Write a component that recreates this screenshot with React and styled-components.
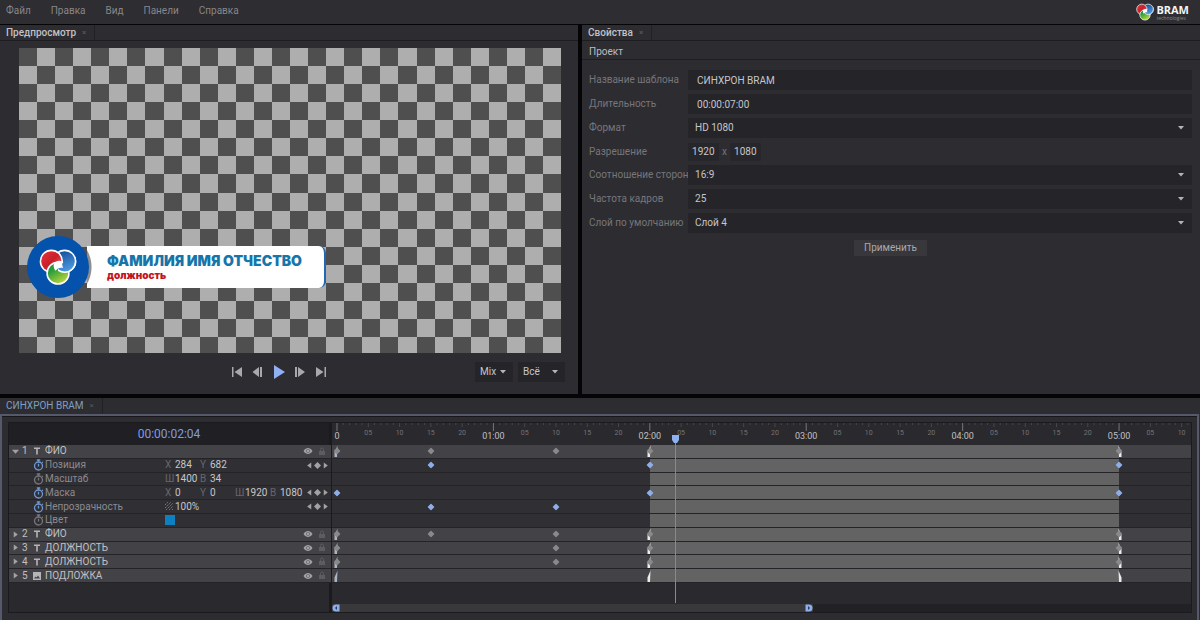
import React from "react"
import styled, { createGlobalStyle, css } from "styled-components"

const GlobalStyle = createGlobalStyle`
  * {
    box-sizing: border-box;
  }
  body {
    margin: 0;
    background: #050507;
    color: #bdbdc0;
    font-family: Roboto, "Liberation Sans", sans-serif;
    font-size: 10px;
    line-height: 12px;
  }
  button, input, select {
    font: inherit;
    color: inherit;
    border: 0;
    border-radius: 0;
    margin: 0;
    padding: 0;
    background: none;
    outline: none;
  }
`

const Page = styled.div`
  display: flex;
  flex-direction: column;
  min-height: 100vh;
`

const Header = styled.header`
  display: flex;
  align-items: center;
  justify-content: space-between;
  height: 24px;
  padding: 0 11px 3px 6px;
  background: #2e2d31;
`

const Menu = styled.nav`
  display: flex;
  gap: 20px;
`

const MenuItem = styled.button`
  color: #87868a;
`

const Brand = styled.div`
  display: flex;
  align-items: center;
  gap: 2px;
  padding-top: 3px;
`

const BrandName = styled.div`
  color: #f4f4f6;
  font-family: "Open Sans", sans-serif;
  font-size: 11px;
  font-weight: 700;
  line-height: 12px;
  small {
    display: block;
    color: #85858a;
    font-size: 5px;
    font-weight: 400;
    line-height: 5px;
  }
`

const Panels = styled.main`
  display: grid;
  grid-template-columns: 29fr 31fr;
  gap: 4px;
  padding: 1px 0 4px;
`

const Panel = styled.section`
  display: flex;
  flex-direction: column;
  background: #2d2c31;
`

const TabBar = styled.div`
  display: flex;
  height: 16px;
  border-bottom: 1px solid #1d1c20;
  background: #2d2c31;
`

const Tab = styled.div`
  display: flex;
  align-items: center;
  gap: 6px;
  padding: 0 8px 0 6px;
  border-right: 1px solid #212024;
  color: ${p => (p.$accent ? "#7d9fc0" : "#c2c2c5")};
  font-weight: ${p => (p.$accent ? 400 : 500)};
`

const TabClose = styled.button`
  color: #58575c;
  font-size: 8px;
  line-height: 8px;
`

const StageWrap = styled.div`
  padding: 7px 17px 0 19px;
`

const Stage = styled.div`
  position: relative;
  aspect-ratio: 16 / 9;
  background: #aeaeae;
`

const Checker = styled.svg`
  display: block;
  width: 100%;
  height: 100%;
`

const LowerThird = styled.div`
  position: absolute;
  left: 8px;
  bottom: 55px;
  display: flex;
  align-items: center;
`

const Badge = styled.div`
  z-index: 1;
  display: flex;
  align-items: center;
  justify-content: center;
  width: 62px;
  height: 62px;
  border-radius: 50%;
  background: #0452ab;
`

const Plate = styled.div`
  width: 239px;
  height: 42px;
  margin-left: -2px;
  padding: 7px 0 0 20px;
  border-right: 2px solid #2367b2;
  border-radius: 0 7px 7px 0;
  background: radial-gradient(circle at -29px 50%, #8d8d8d 33px, #fff 34px);
  font-family: Inter, sans-serif;
  font-weight: 900;
  white-space: nowrap;
`

const PersonName = styled.div`
  color: #1675a9;
  font-size: 14px;
  line-height: 15px;
`

const PersonRole = styled.div`
  color: #c4141c;
  font-size: 10px;
  line-height: 14px;
`

const Transport = styled.div`
  display: flex;
  align-items: center;
  height: 41px;
  padding: 0 13px 3px 0;
`

const TransportButtons = styled.div`
  display: flex;
  margin-left: 40%;
  margin-right: auto;
`

const TransportButton = styled.button`
  display: flex;
  justify-content: center;
  width: 21px;
  color: ${p => (p.$main ? "#8fb0f4" : "#a9a9ac")};
`

const SelectBox = styled.div`
  position: relative;
  width: ${p => p.$width || "100%"};
  margin-left: ${p => (p.$width ? "5px" : 0)};
  svg {
    position: absolute;
    right: ${p => (p.$width ? "7px" : "8px")};
    top: 8px;
    pointer-events: none;
  }
  select {
    display: block;
    width: 100%;
    height: 20px;
    padding: 0 ${p => (p.$width ? "5px" : "7px")};
    appearance: none;
    background: #252428;
    color: #c6c6c9;
  }
`

const SectionTitle = styled.h2`
  margin: 0;
  height: 19px;
  padding: 5px 7px 0;
  border-bottom: 1px solid #1f1e22;
  font-size: 10px;
  font-weight: 400;
`

const Form = styled.form`
  display: grid;
  grid-template-columns: 99px 1fr;
  align-items: center;
  gap: 4px 0;
  padding: 10px 8px 0 7px;
`

const Label = styled.label`
  color: #77767b;
  white-space: nowrap;
`

const TextField = styled.input`
  width: 100%;
  height: 20px;
  padding: 0 9px;
  background: #252428;
  color: #c6c6c9;
`

const Resolution = styled.div`
  display: flex;
  align-items: center;
  gap: 3px;
  height: 19px;
  color: #77767b;
  input {
    width: 31px;
    height: 18px;
    padding: 0 4px;
    background: #27262a;
    color: #c6c6c9;
  }
`

const ApplyButton = styled.button`
  grid-column: 1 / -1;
  justify-self: center;
  height: 16px;
  margin-top: 3px;
  padding: 0 10px;
  background: #38373b;
  color: #a9a9ac;
`

const TimelinePanel = styled.section`
  display: flex;
  flex: 1;
  flex-direction: column;
  background: #2d2c31;
  ${TabBar} {
    border-bottom: 0;
  }
`

const TimelineFrame = styled.div`
  display: flex;
  flex: 1;
  margin-right: 1px;
  padding: 6px 5px 7px 6px;
  border: 2px solid #56596b;
  border-bottom: 0;
  box-shadow: inset 0 1px #17161a;
`

const TimelineBody = styled.div`
  display: grid;
  flex: 1;
  grid-template-columns: 320px 1fr;
  gap: 3px;
  border: 1px solid #1b1a1e;
  background: linear-gradient(#1b1a1e, #1b1a1e) 320px 0 / 3px 100% no-repeat #2a292d;
`

const LayerList = styled.div`
  display: flex;
  flex-direction: column;
`

const Timecode = styled.output`
  height: 22px;
  background: #201f23;
  color: #7f9de0;
  font-size: 12px;
  line-height: 22px;
  text-align: center;
`

const Rows = styled.div`
  display: grid;
  grid-template-rows: repeat(10, 1fr);
  height: 138px;
`

const rowSurface = css`
  border-bottom: 1px solid #242327;
  background: ${p => (p.$layer ? "#434246" : "#302f34")};
`

const Row = styled.div`
  ${rowSurface}
  display: flex;
  align-items: center;
  min-height: 0;
  padding: 0 2px 0 ${p => (p.$layer ? "2px" : "24px")};
  color: ${p => (p.$layer ? "#c0c0c3" : "#8b8a8f")};
  svg {
    flex: none;
  }
`

const LayerNumber = styled.span`
  width: 10px;
  margin-left: 2px;
`

const LayerName = styled.span`
  flex: 1;
  margin-left: 3px;
`

const PropName = styled.span`
  width: 120px;
  margin-left: 1px;
`

const IconButton = styled.button`
  display: flex;
  justify-content: center;
  width: ${p => p.$width || 14}px;
  color: ${p => p.$color || "#a2a2a5"};
`

const Value = styled.label`
  display: flex;
  align-items: center;
  width: 35px;
  color: #67666b;
  white-space: nowrap;
  span {
    width: 10px;
  }
  input {
    width: 25px;
    height: 12px;
    color: #c6c6c9;
  }
`

const Swatch = styled.button`
  width: 10px;
  height: 10px;
  background: #0d80c2;
`

const KeyNav = styled.div`
  display: flex;
  margin-left: auto;
`

const LaneArea = styled.div`
  position: relative;
  display: flex;
  flex-direction: column;
  min-width: 0;
  overflow: hidden;
`

const Ruler = styled.div`
  position: relative;
  height: 22px;
  background: #2a292d;
  svg {
    display: block;
    width: 100%;
    height: 8px;
  }
`

const RulerLabel = styled.span`
  position: absolute;
  top: ${p => (p.$major ? 7 : 4)}px;
  transform: translateX(-50%);
  color: ${p => (p.$major ? "#c0c0c3" : "#747378")};
  font-size: ${p => (p.$major ? 9 : 7)}px;
`

const Lane = styled.div`
  ${rowSurface}
  position: relative;
`

const Clip = styled.div`
  position: absolute;
  top: 0;
  bottom: 0;
  background: #636363;
`

const Mark = styled.svg`
  position: absolute;
  top: 50%;
  transform: translate(-50%, -50%);
`

const Playhead = styled.div`
  position: absolute;
  top: 12px;
  bottom: 9px;
  width: 1px;
  background: #86879b;
  svg {
    position: absolute;
    left: -3px;
    top: 0;
  }
`

const ZoomBar = styled.div`
  height: 8px;
  margin-top: auto;
  background: #222125;
`

const ZoomThumb = styled.div`
  display: flex;
  justify-content: space-between;
  width: 56%;
  height: 8px;
  background: #39393b;
`

const VISIBLE_FRAMES = 137.3
const at = frame => `${((frame + 0.8) / VISIBLE_FRAMES) * 100}%`

const layers = [
  { id: 1, type: "text", name: "ФИО", open: true, keys: [0, 15, 35, 50, 125] },
  { prop: "Позиция", active: true, nav: true, values: [["X", 284], ["Y", 682]], keys: [15, 50, 125] },
  { prop: "Масштаб", values: [["Ш", 1400], ["В", 34]], keys: [] },
  { prop: "Маска", active: true, nav: true, values: [["X", 0], ["Y", 0], ["Ш", 1920], ["В", 1080]], keys: [0, 50, 125] },
  { prop: "Непрозрачность", active: true, nav: true, values: [[null, "100%"]], keys: [15, 35] },
  { prop: "Цвет", swatch: true, keys: [] },
  { id: 2, type: "text", name: "ФИО", keys: [0, 15, 35, 50, 125] },
  { id: 3, type: "text", name: "ДОЛЖНОСТЬ", keys: [0, 35, 50, 125] },
  { id: 4, type: "text", name: "ДОЛЖНОСТЬ", keys: [0, 35, 50, 125] },
  { id: 5, type: "image", name: "ПОДЛОЖКА", keys: [] },
]

// dark cells of the transparency grid, 30 across and 17 down
const checkerPath = Array.from({ length: 30 * 17 }, (_, i) => [i % 30, Math.floor(i / 30)])
  .filter(([x, y]) => (x + y) % 2 === 0)
  .map(([x, y]) => `M${x} ${y}h1v1h-1z`)
  .join("")

// the three discs overlap in a cycle: red over blue, green over red, blue over green
const Logo = ({ size }) => (
  <svg width={size} height={size} viewBox="0 0 40 40" aria-hidden="true">
    <defs>
      <linearGradient id="red" x1="0" y1="0" x2="1" y2="1">
        <stop offset="0" stopColor="#e8353f" />
        <stop offset="0.5" stopColor="#c8202a" />
        <stop offset="1" stopColor="#e87a7a" />
      </linearGradient>
      <linearGradient id="blue" x1="0" y1="0" x2="0.4" y2="1">
        <stop offset="0" stopColor="#0b4493" />
        <stop offset="1" stopColor="#4b97dc" />
      </linearGradient>
      <linearGradient id="green" x1="0" y1="0" x2="0.6" y2="1">
        <stop offset="0" stopColor="#128c3a" />
        <stop offset="0.4" stopColor="#2f9f3a" />
        <stop offset="1" stopColor="#b9d63a" />
      </linearGradient>
      <clipPath id="blueOver">
        <path d="M20 18L25 16L40 8V40H20Z" />
      </clipPath>
    </defs>
    <g stroke="#fff" strokeWidth="1.6">
      <circle cx="27" cy="14" r="11.5" fill="url(#blue)" />
      <circle cx="13" cy="14" r="11.5" fill="url(#red)" />
      <circle cx="20" cy="26.500" r="11.5" fill="url(#green)" />
      <circle cx="27" cy="14" r="11.5" fill="url(#blue)" clipPath="url(#blueOver)" />
    </g>
    <path d="M15.500 17C17 14 21 12.500 24.500 14C24 16.500 24.500 19 25.500 21C22 20 19.500 21.500 17.500 24C16 22 15 19.500 15.500 17Z" fill="#fff" />
  </svg>
)

const Caret = () => (
  <svg width="6" height="4" viewBox="0 0 6 4">
    <path d="M0 0H6L3 3.5Z" fill="#b5b5b8" />
  </svg>
)

const Triangle = ({ d, size = 7 }) => (
  <svg width={size} height={size} viewBox="0 0 6 6">
    <path d={d} fill="currentColor" />
  </svg>
)

const Hatch = () => (
  <svg width="8" height="8" viewBox="0 0 8 8" stroke="#77767b">
    <path d="M0 3L3 0M0 6L6 0M1 8L8 1M4 8L8 4M7 8L8 7" strokeDasharray="2 1" />
  </svg>
)

const Stopwatch = ({ active }) => (
  <svg width="11" height="12" viewBox="0 0 11 12" fill="none" stroke={active ? "#6f97d2" : "#77767b"} strokeWidth="1.3">
    <circle cx="5.5" cy="7" r="4" />
    <path d="M3.8 1H7.2M5.5 1V3M5.5 4.8V7.4M9 3L9.8 3.8" />
  </svg>
)

const TypeIcon = ({ type }) => (
  <svg width="10" height="10" viewBox="0 0 10 10" fill="#b5b5b8">
    {type === "text" ? (
      <path d="M2 1.5H8V3H5.8V8.5H4.2V3H2Z" />
    ) : (
      <path fillRule="evenodd" d="M1 1H9V9H1ZM2 7.5H8L6 4.6L4.6 6.5L3.5 5.4Z" />
    )}
  </svg>
)

const Eye = () => (
  <svg width="10" height="8" viewBox="0 0 10 8">
    <path
      fillRule="evenodd"
      fill="currentColor"
      d="M0.500 4C2 1.800 3.400 1 5 1S8 1.800 9.500 4C8 6.200 6.600 7 5 7S2 6.200 0.500 4ZM5 2.200A1.800 1.800 0 1 0 5 5.800A1.800 1.800 0 1 0 5 2.200ZM5 2.700A1.300 1.300 0 1 1 5 5.300A1.300 1.300 0 1 1 5 2.700Z"
    />
  </svg>
)

const Lock = () => (
  <svg width="8" height="9" viewBox="0 0 8 9">
    <path d="M1 4H7V8H1Z" fill="currentColor" />
    <path d="M2.500 4V2.500A1.500 1.500 0 0 1 5.500 2.500V4" fill="none" stroke="currentColor" />
  </svg>
)

const transport = [
  { label: "В начало", d: "M2 2H3.500V12H2ZM12 2V12L4.500 7Z" },
  { label: "Кадр назад", d: "M8 2V12L1.500 7ZM9 2H11V12H9Z" },
  { label: "Воспроизвести", d: "M2 0V14L13 7Z", main: true },
  { label: "Кадр вперёд", d: "M2 2H4V12H2ZM5 2V12L12 7Z" },
  { label: "В конец", d: "M2 2V12L9.500 7ZM10.500 2H12V12H10.500Z" },
]

const Select = ({ id, value, width, label }) => (
  <SelectBox $width={width}>
    <select id={id} defaultValue={value} aria-label={label}>
      <option>{value}</option>
    </select>
    <Caret />
  </SelectBox>
)

const Preview = () => (
  <Panel>
    <TabBar>
      <Tab>
        Предпросмотр <TabClose aria-label="Закрыть">×</TabClose>
      </Tab>
    </TabBar>
    <StageWrap>
      <Stage>
        <Checker viewBox="0 0 30 16.875" shapeRendering="crispEdges" preserveAspectRatio="none">
          <path d={checkerPath} fill="#4f4f4f" />
        </Checker>
        <LowerThird>
          <Badge>
            <Logo size={38} />
          </Badge>
          <Plate>
            <PersonName>ФАМИЛИЯ ИМЯ ОТЧЕСТВО</PersonName>
            <PersonRole>должность</PersonRole>
          </Plate>
        </LowerThird>
      </Stage>
    </StageWrap>
    <Transport>
      <TransportButtons>
        {transport.map(({ label, d, main }) => (
          <TransportButton key={label} aria-label={label} $main={main}>
            <svg width="14" height="14" viewBox="0 0 14 14">
              <path d={d} fill="currentColor" />
            </svg>
          </TransportButton>
        ))}
      </TransportButtons>
      <Select value="Mix" width="38px" label="Режим" />
      <Select value="Всё" width="47px" label="Каналы" />
    </Transport>
  </Panel>
)

const Properties = () => (
  <Panel>
    <TabBar>
      <Tab>
        Свойства <TabClose aria-label="Закрыть">×</TabClose>
      </Tab>
    </TabBar>
    <SectionTitle>Проект</SectionTitle>
    <Form onSubmit={e => e.preventDefault()}>
      <Label htmlFor="name">Название шаблона</Label>
      <TextField id="name" defaultValue="СИНХРОН BRAM" />
      <Label htmlFor="duration">Длительность</Label>
      <TextField id="duration" defaultValue="00:00:07:00" />
      <Label htmlFor="format">Формат</Label>
      <Select id="format" value="HD 1080" />
      <Label htmlFor="width">Разрешение</Label>
      <Resolution>
        <input id="width" defaultValue="1920" />
        x
        <input aria-label="Высота" defaultValue="1080" />
      </Resolution>
      <Label htmlFor="ratio">Соотношение сторон</Label>
      <Select id="ratio" value="16:9" />
      <Label htmlFor="fps">Частота кадров</Label>
      <Select id="fps" value="25" />
      <Label htmlFor="layer">Слой по умолчанию</Label>
      <Select id="layer" value="Слой 4" />
      <ApplyButton>Применить</ApplyButton>
    </Form>
  </Panel>
)

const LayerRow = ({ layer }) => (
  <Row $layer>
    <IconButton $width={9} aria-label="Развернуть">
      <Triangle d={layer.open ? "M0 1.500H6L3 5Z" : "M1.500 0.500V5.500L5 3Z"} />
    </IconButton>
    <LayerNumber>{layer.id}</LayerNumber>
    <TypeIcon type={layer.type} />
    <LayerName>{layer.name}</LayerName>
    <IconButton aria-label="Видимость">
      <Eye />
    </IconButton>
    <IconButton $color="#5d5c61" aria-label="Блокировка">
      <Lock />
    </IconButton>
  </Row>
)

const PropertyRow = ({ layer }) => (
  <Row>
    <Stopwatch active={layer.active} />
    <PropName>{layer.prop}</PropName>
    {layer.swatch && <Swatch aria-label="Цвет" />}
    {layer.values?.map(([label, value], idx) => (
      <Value key={idx}>
        <span>{label || <Hatch />}</span>
        <input defaultValue={value} />
      </Value>
    ))}
    {layer.nav && (
      <KeyNav>
        {["M4.500 0.500V5.500L1 3Z", "M3 0L6 3L3 6L0 3Z", "M1.500 0.500V5.500L5 3Z"].map((d, idx) => (
          <IconButton key={idx} $width={8} aria-label="Ключ">
            <Triangle d={d} />
          </IconButton>
        ))}
      </KeyNav>
    )}
  </Row>
)

const LaneRow = ({ layer }) => (
  <Lane $layer={layer.id}>
    <Clip style={{ left: at(50), width: `${(75 / VISIBLE_FRAMES) * 100}%` }} />
    {layer.id &&
      [0, 50, 125].map(frame => (
        <Mark key={frame} width="6" height="13" viewBox="0 0 6 13" style={{ left: at(frame) }}>
          <path
            d={frame === 125 ? "M2.500 1L5.500 8V12.500H3Z" : "M3.500 1L0.500 8V12.500H3Z"}
            fill={frame === 0 ? "#a9b4c6" : "#ececec"}
          />
        </Mark>
      ))}
    {layer.keys.map(frame => (
      <Mark key={frame} width="7" height="7" viewBox="0 0 7 7" style={{ left: at(frame) }}>
        <path d="M3.500 0L7 3.500L3.500 7L0 3.500Z" fill={layer.id ? "#89898b" : "#8eaeea"} />
      </Mark>
    ))}
  </Lane>
)

const frames = Array.from({ length: 137 }, (_, i) => i)

const pad = n => String(n).padStart(2, "0")

const Timeline = () => (
  <TimelinePanel>
    <TabBar>
      <Tab $accent>
        СИНХРОН BRAM <TabClose aria-label="Закрыть">×</TabClose>
      </Tab>
    </TabBar>
    <TimelineFrame>
      <TimelineBody>
        <LayerList>
          <Timecode>00:00:02:04</Timecode>
          <Rows>
            {layers.map((layer, idx) =>
              layer.id ? <LayerRow key={idx} layer={layer} /> : <PropertyRow key={idx} layer={layer} />
            )}
          </Rows>
        </LayerList>
        <LaneArea>
          <Ruler>
            <svg>
              {frames.map(f => (
                <line
                  key={f}
                  x1={at(f)}
                  x2={at(f)}
                  y1="0"
                  y2={f % 25 === 0 ? 8 : f % 5 === 0 ? 4 : 2}
                  stroke={f % 25 === 0 ? "#77767b" : "#48474c"}
                />
              ))}
            </svg>
            {frames
              .filter(f => f % 5 === 0)
              .map(f => (
                <RulerLabel key={f} $major={f % 25 === 0} style={{ left: at(f) }}>
                  {f === 0 ? "0" : f % 25 === 0 ? `${pad(f / 25)}:00` : pad(f % 25)}
                </RulerLabel>
              ))}
          </Ruler>
          <Rows>
            {layers.map((layer, idx) => (
              <LaneRow key={idx} layer={layer} />
            ))}
          </Rows>
          <ZoomBar>
            <ZoomThumb>
              <svg width="8" height="8" viewBox="0 0 8 8">
                <path d="M7.500 0.500V7.500H4A3.500 3.500 0 0 1 4 0.500Z" fill="#8eaeea" />
                <path d="M5 2V6L3 4Z" fill="#2b3b60" />
              </svg>
              <svg width="8" height="8" viewBox="0 0 8 8">
                <path d="M0.500 0.500V7.500H4A3.500 3.500 0 0 0 4 0.500Z" fill="#8eaeea" />
                <path d="M3 2V6L5 4Z" fill="#2b3b60" />
              </svg>
            </ZoomThumb>
          </ZoomBar>
          <Playhead style={{ left: at(54) }}>
            <svg width="7" height="8" viewBox="0 0 7 8">
              <path d="M0 0H7V5L5 8H2L0 5Z" fill="#8eb2ee" />
            </svg>
          </Playhead>
        </LaneArea>
      </TimelineBody>
    </TimelineFrame>
  </TimelinePanel>
)

const App = () => (
  <Page>
    <GlobalStyle />
    <Header>
      <Menu>
        {["Файл", "Правка", "Вид", "Панели", "Справка"].map(item => (
          <MenuItem key={item}>{item}</MenuItem>
        ))}
      </Menu>
      <Brand>
        <Logo size={18} />
        <BrandName>
          BRAM
          <small>technologies</small>
        </BrandName>
      </Brand>
    </Header>
    <Panels>
      <Preview />
      <Properties />
    </Panels>
    <Timeline />
  </Page>
)

export default App
